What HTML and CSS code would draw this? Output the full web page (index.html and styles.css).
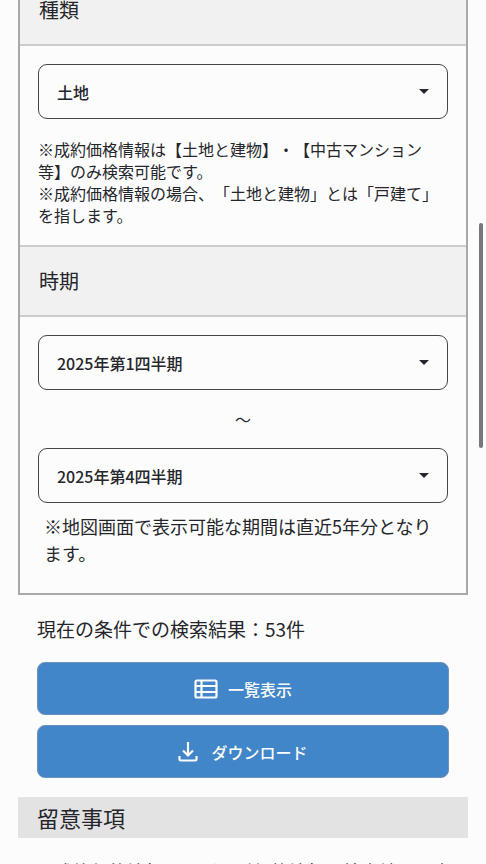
FILE: index.html
```html
<!DOCTYPE html>
<html lang="ja">
<head>
  <meta charset="UTF-8">
  <meta name="viewport" content="width=device-width, initial-scale=1.0">
  <title>価格情報の検索</title>
  <link rel="stylesheet" href="styles.css">
</head>
<body>
  <main>
    <form class="panel">
      <h2><label for="type">種類</label></h2>
      <div class="panel-body">
        <div class="select-box">
          <select id="type">
            <option>土地</option>
            <option>土地と建物</option>
            <option>中古マンション等</option>
          </select>
        </div>
        <p class="note">※成約価格情報は【土地と建物】・【中古マンション等】のみ検索可能です。<br>※成約価格情報の場合、「土地と建物」とは「戸建て」を指します。</p>
      </div>

      <h2>時期</h2>
      <div class="panel-body period">
        <div class="select-box">
          <select id="from" aria-label="開始時期">
            <option>2025年第1四半期</option>
          </select>
        </div>
        <p class="tilde">～</p>
        <div class="select-box">
          <select id="to" aria-label="終了時期">
            <option>2025年第4四半期</option>
          </select>
        </div>
        <p class="period-note">※地図画面で表示可能な期間は直近5年分となります。</p>
      </div>
    </form>

    <section class="result">
      <p>現在の条件での検索結果：53件</p>
      <button type="button">
        <svg width="24" height="20" viewBox="0 0 24 20" fill="none" stroke="currentColor" stroke-width="2.2">
          <rect x="1.5" y="1.5" width="21" height="17" rx="1.5"/>
          <path d="M7.5 2v16M2 7h20M2 13h20"/>
        </svg>
        一覧表示
      </button>
      <button type="button" class="download">
        <svg width="20" height="20" viewBox="0 0 20 20" fill="none" stroke="currentColor" stroke-width="2.2">
          <path d="M10 0v13M5 8.5l5 5 5-5M1.5 14v3.5a1 1 0 0 0 1 1h15a1 1 0 0 0 1-1V14"/>
        </svg>
        ダウンロード
      </button>
    </section>

    <section class="remarks">
      <h3>留意事項</h3>
      <p>・成約価格情報、及び取引価格情報の検索結果の内</p>
    </section>
  </main>
  <div class="scrollbar"></div>
</body>
</html>
```

FILE: styles.css
```css
* {
  box-sizing: border-box;
}

body {
  font-family: "Noto Sans CJK JP", sans-serif;
  text-spacing-trim: space-all;
  margin: 0;
  height: 100vh;
  overflow: hidden;
  background-color: #fcfcfc;
  color: #25262b;
}

main {
  padding: 0 18px;
}

h2, h3, p {
  margin: 0;
  font-weight: 400;
}

.panel {
  margin-top: -26px;
  border: 2px solid #a9a9ab;
}

.panel h2 {
  padding: 20px 19px;
  background-color: #f1f1f1;
  border-bottom: 2px solid #cbcccc;
  font-size: 20px;
  line-height: 28px;
}

.panel-body + h2 {
  border-top: 2px solid #cbcccc;
}

.panel-body {
  padding: 18px 18px 19px;
}

.select-box {
  position: relative;
}

.select-box::after {
  content: "";
  position: absolute;
  top: 25px;
  right: 19px;
  border: 5px solid transparent;
  border-top-color: #25262b;
  border-bottom: 0;
  pointer-events: none;
}

select {
  appearance: none;
  display: block;
  width: 100%;
  height: 55px;
  padding: 0 18px;
  border: 1px solid #45464c;
  border-radius: 9px;
  background-color: #fcfcfc;
  color: inherit;
  font-family: inherit;
  font-size: 16px;
  font-weight: 500;
}

.note {
  margin-top: 19px;
  font-size: 16px;
  line-height: 22px;
}

.tilde {
  font-size: 16px;
  line-height: 58px;
  text-align: center;
}

.period {
  padding-bottom: 26px;
}

.period-note {
  margin-top: 10px;
  padding: 0 6px;
  font-size: 18px;
  line-height: 27px;
}

.result {
  display: flex;
  flex-direction: column;
  gap: 10px;
  padding: 20px 19px 19px;
}

.result p {
  margin-bottom: 9px;
  font-size: 19px;
  line-height: 28px;
}

button {
  display: flex;
  align-items: center;
  justify-content: center;
  gap: 10px;
  height: 53px;
  border: 1px solid #6e91b8;
  border-radius: 8px;
  background-color: #4186c8;
  color: #fcfcfc;
  font-family: inherit;
  font-size: 16px;
  font-weight: 500;
  cursor: pointer;
}

button.download {
  gap: 13px;
}

.remarks h3 {
  padding: 4px 19px;
  background-color: #e3e3e3;
  font-size: 22px;
  line-height: 33px;
}

.remarks p {
  padding: 20px 19px;
  font-size: 18px;
  line-height: 27px;
  white-space: nowrap;
}

.scrollbar {
  position: fixed;
  top: 223px;
  right: 3px;
  width: 4px;
  height: 225px;
  border-radius: 2px;
  background-color: #77777e;
}
```
